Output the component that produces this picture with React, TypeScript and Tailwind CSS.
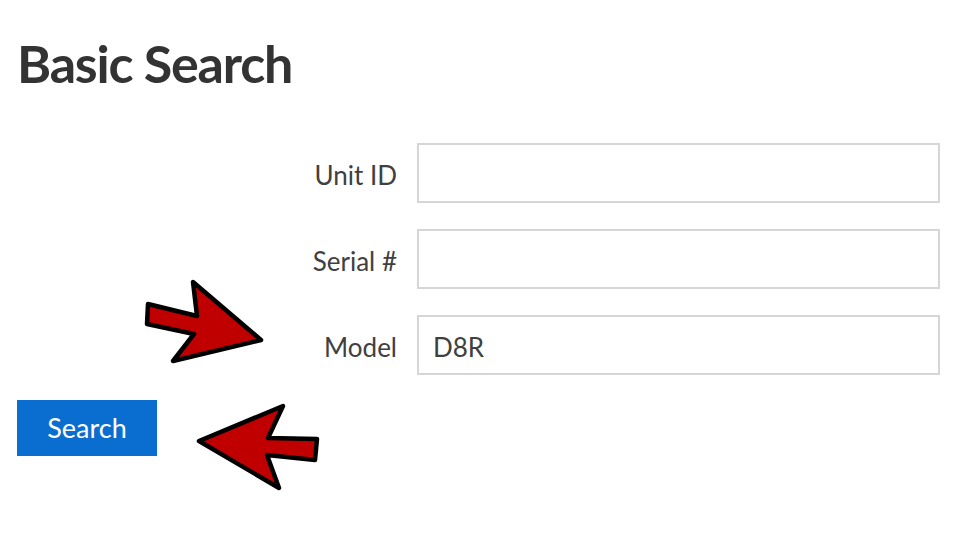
const fields = [
  { label: 'Unit ID', value: '' },
  { label: 'Serial #', value: '' },
  { label: 'Model', value: 'D8R' }
];

function Arrows() {
  return (
    <svg className="pointer-events-none absolute inset-0" width="976" height="555" viewBox="0 0 976 555">
      <g fill="#c00000" stroke="#000" strokeWidth="4.5" strokeLinejoin="round">
        <polygon points="148,304 197,316 193,282 261,340 173,361 194,334 147,324" />
        <polygon points="199,441 283,406 268,438 317,439 315,460 267,455 279,488" />
      </g>
    </svg>
  );
}

export default function App() {
  return (
    <div className="relative h-[555px] w-[976px] overflow-hidden bg-white font-['Lato','Open_Sans',sans-serif]">
      <div className="px-[17px] pt-[37px]">
        <h1 className="text-[52px] font-bold leading-none tracking-[-1.2px] text-[#333]">Basic Search</h1>

        <div className="mt-[54px] grid grid-cols-[380px_523px] gap-x-[20px] gap-y-[26px]">
          {fields.map((f) => (
            <div key={f.label} className="contents">
              <label className="flex h-[60px] items-center justify-end pt-[4px] text-[26px] text-[#404040]">{f.label}</label>
              <input
                readOnly
                value={f.value}
                className="h-[60px] w-full border-2 border-[#d6d6d6] bg-white px-[14px] pt-[4px] text-[26px] text-[#404040] outline-none"
              />
            </div>
          ))}
        </div>

        <button className="mt-[25px] flex h-[56px] w-[140px] items-center justify-center bg-[#0a6ed1] text-[27px] text-white">
          Search
        </button>
      </div>
      <Arrows />
    </div>
  );
}
